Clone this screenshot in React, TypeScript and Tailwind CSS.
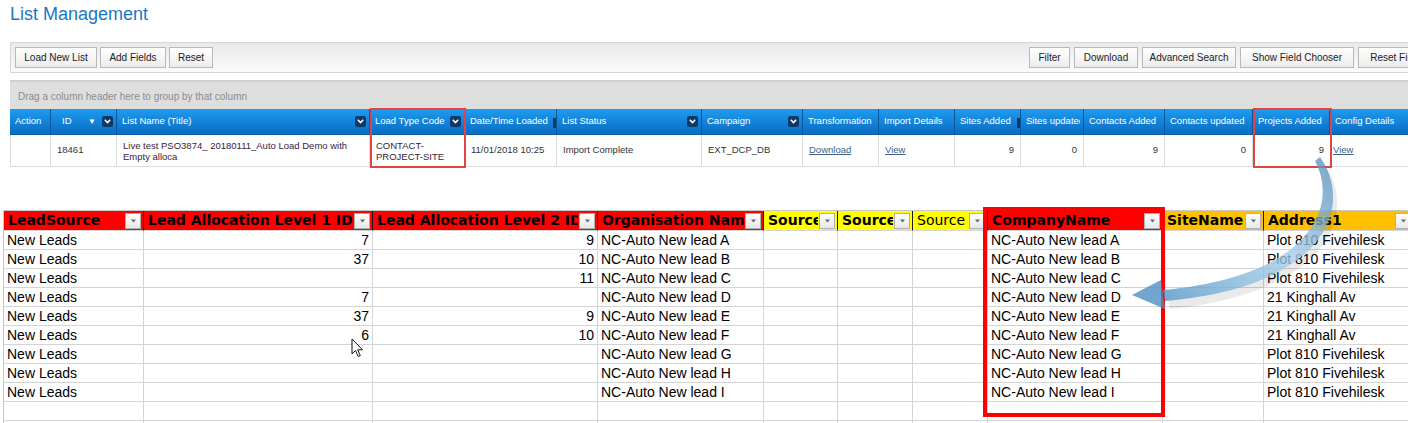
import React from 'react';

type GridCol = {
  label: string;
  w: number;
  menu?: boolean;
  sort?: boolean;
  sliver?: boolean;
};

const gridCols: GridCol[] = [
  { label: 'Action', w: 41 },
  { label: 'ID', w: 66, sort: true, menu: true },
  { label: 'List Name (Title)', w: 253, menu: true },
  { label: 'Load Type Code', w: 95, menu: true },
  { label: 'Date/Time Loaded', w: 92, sliver: true },
  { label: 'List Status', w: 145, menu: true },
  { label: 'Campaign', w: 101, menu: true },
  { label: 'Transformation', w: 76 },
  { label: 'Import Details', w: 76 },
  { label: 'Sites Added', w: 66, sliver: true },
  { label: 'Sites updated', w: 63 },
  { label: 'Contacts Added', w: 81 },
  { label: 'Contacts updated', w: 88 },
  { label: 'Projects Added', w: 77 },
  { label: 'Config Details', w: 90 },
];

type SheetCol = { label: string; w: number; bg: string; bold?: boolean; right?: boolean };

const sheetCols: SheetCol[] = [
  { label: 'LeadSource', w: 140, bg: 'bg-[#ff0000]', bold: true },
  { label: 'Lead Allocation Level 1 ID', w: 229, bg: 'bg-[#ff0000]', bold: true, right: true },
  { label: 'Lead Allocation Level 2 ID', w: 225, bg: 'bg-[#ff0000]', bold: true, right: true },
  { label: 'Organisation Name', w: 166, bg: 'bg-[#ff0000]', bold: true },
  { label: 'Source', w: 74, bg: 'bg-[#ffff00]', bold: true },
  { label: 'Source', w: 75, bg: 'bg-[#ffff00]', bold: true },
  { label: 'Source', w: 75, bg: 'bg-[#ffff00]' },
  { label: 'CompanyName', w: 175, bg: 'bg-[#ff0000]', bold: true },
  { label: 'SiteName', w: 101, bg: 'bg-[#ffc000]', bold: true },
  { label: 'Address1', w: 150, bg: 'bg-[#ffc000]', bold: true },
];

const l1 = ['7', '37', '', '7', '37', '6', '', '', ''];
const l2 = ['9', '10', '11', '', '9', '10', '', '', ''];
const letters = ['A', 'B', 'C', 'D', 'E', 'F', 'G', 'H', 'I'];
const addr = [
  'Plot 810 Fivehilesk',
  'Plot 810 Fivehilesk',
  'Plot 810 Fivehilesk',
  '21 Kinghall Av',
  '21 Kinghall Av',
  '21 Kinghall Av',
  'Plot 810 Fivehilesk',
  'Plot 810 Fivehilesk',
  'Plot 810 Fivehilesk',
];

const sheetRows: string[][] = [
  ...letters.map((l, i) => [
    'New Leads',
    l1[i],
    l2[i],
    `NC-Auto New lead ${l}`,
    '',
    '',
    '',
    `NC-Auto New lead ${l}`,
    '',
    addr[i],
  ]),
  ['', '', '', '', '', '', '', '', '', ''],
  ['', '', '', '', '', '', '', '', '', ''],
];

function ToolButton({ label, w }: { label: string; w: number }) {
  return (
    <button
      className="h-[21px] shrink-0 border border-[#b9b9b9] bg-gradient-to-b from-white to-[#ececec] text-[10px] text-[#222] whitespace-nowrap overflow-hidden"
      style={{ width: w }}
    >
      {label}
    </button>
  );
}

function MenuIcon() {
  return (
    <span className="w-[11px] h-[11px] rounded-[2px] bg-[#0b3a68] flex items-center justify-center shrink-0">
      <svg width="7" height="5" viewBox="0 0 7 5">
        <path d="M0.8 0.8 L3.5 3.6 L6.2 0.8" fill="none" stroke="white" strokeWidth="1.6" />
      </svg>
    </span>
  );
}

function SheetButton() {
  return (
    <span className="absolute right-[2px] top-[2px] w-[16px] h-[16px] border border-[#b0b0b0] bg-gradient-to-b from-white to-[#e8e8e8] flex items-center justify-center">
      <svg width="7" height="4" viewBox="0 0 7 4">
        <path d="M1 0.5 L6 0.5 L3.5 3.5 Z" fill="#666" />
      </svg>
    </span>
  );
}

export default function App() {
  return (
    <div
      className="relative w-[1408px] h-[423px] overflow-hidden bg-white"
      style={{ fontFamily: '"Liberation Sans", Arial, sans-serif' }}
    >
      <h1 className="pl-[10px] pt-[3px] h-[42px] text-[18px] leading-[22px] text-[#1b76c3] font-normal">
        List Management
      </h1>

      {/* toolbar */}
      <div className="ml-[10px] w-[1433px] h-[31px] border border-[#d6d6d6] bg-gradient-to-b from-[#e9e9e9] to-[#fbfbfb] flex items-center px-[4px]">
        <div className="flex gap-[3px]">
          <ToolButton label="Load New List" w={82} />
          <ToolButton label="Add Fields" w={66} />
          <ToolButton label="Reset" w={44} />
        </div>
        <div className="flex-1" />
        <div className="flex gap-[4px]">
          <ToolButton label="Filter" w={41} />
          <ToolButton label="Download" w={64} />
          <ToolButton label="Advanced Search" w={94} />
          <ToolButton label="Show Field Chooser" w={114} />
          <ToolButton label="Reset Fields" w={80} />
        </div>
      </div>

      {/* group panel */}
      <div className="mt-[7px] ml-[10px] w-[1420px] h-[29px] bg-[#dedede] border-t-2 border-[#d0d0d0] flex items-center pl-[8px] pt-[2px] text-[10px] text-[#8c8c8c]">
        Drag a column header here to group by that column
      </div>

      {/* grid header */}
      <div className="ml-[10px] flex h-[26px] bg-gradient-to-b from-[#1e9cf0] to-[#0a6cc2] border-b border-[#0a5ea8]">
        {gridCols.map((c, i) => (
          <div
            key={i}
            className="relative shrink-0 flex items-center gap-[3px] pl-[5px] pr-[3px] border-r border-[#0a5798] text-white text-[9.5px] whitespace-nowrap overflow-hidden"
            style={{ width: c.w }}
          >
            <span className={`${c.label === 'ID' ? 'pl-[6px]' : ''} flex-1 overflow-hidden`}>{c.label}</span>
            {c.sort && <span className="text-[8px] leading-none mr-[3px]">▼</span>}
            {c.menu && <MenuIcon />}
            {c.sliver && <span className="absolute right-0 top-[9px] w-[3px] h-[10px] bg-[#0b3a68]" />}
          </div>
        ))}
      </div>

      {/* grid data row */}
      <div className="ml-[10px] flex h-[32px] border-b border-[#dcdcdc] text-[9.5px] text-[#333]">
        {gridCols.map((c, i) => {
          let content: React.ReactNode = null;
          let cls = 'pl-[6px]';
          if (i === 1) content = '18461';
          if (i === 2)
            content = (
              <span className="leading-[11px] text-[#3a2238]">
                Live test PSO3874_ 20180111_Auto Load Demo with
                <br />
                Empty alloca
              </span>
            );
          if (i === 3)
            content = (
              <span className="leading-[11px] text-[#3a2238]">
                CONTACT-
                <br />
                PROJECT-SITE
              </span>
            );
          if (i === 4) content = '11/01/2018 10:25';
          if (i === 5) content = 'Import Complete';
          if (i === 6) content = 'EXT_DCP_DB';
          if (i === 7) content = <span className="underline text-[#3d5f8c]">Download</span>;
          if (i === 8) content = <span className="underline text-[#3d5f8c]">View</span>;
          if (i >= 9 && i <= 13) {
            content = ['9', '0', '9', '0', '9'][i - 9];
            cls = 'justify-end pr-[6px]';
          }
          if (i === 14) {
            content = <span className="underline text-[#3d5f8c]">View</span>;
            cls = 'pl-[3px]';
          }
          return (
            <div
              key={i}
              className={`shrink-0 flex items-center whitespace-nowrap overflow-hidden ${
                i === 0 ? 'border-l' : ''
              } ${i < 13 ? 'border-r' : ''} border-[#dcdcdc] ${cls}`}
              style={{ width: c.w }}
            >
              {content}
            </div>
          );
        })}
      </div>

      {/* spreadsheet */}
      <div className="mt-[43px] ml-[3px] border-l border-t border-[#c8c8c8]">
        <div className="flex h-[20px]">
          {sheetCols.map((c, i) => (
            <div
              key={i}
              className={`relative shrink-0 h-[20px] border-r border-[#1a1a1a] border-b border-b-[#d4d4d4] ${c.bg}`}
              style={{ width: c.w }}
            >
              <div
                className={`h-full pl-[4px] pr-[19px] flex items-center overflow-hidden whitespace-nowrap text-[14px] text-black ${
                  c.bold ? 'font-bold' : ''
                }`}
                style={{ fontFamily: '"DejaVu Sans", Verdana, sans-serif' }}
              >
                <span className="overflow-hidden">{c.label}</span>
              </div>
              <SheetButton />
            </div>
          ))}
        </div>
        {sheetRows.map((r, ri) => (
          <div key={ri} className="flex h-[19px]">
            {sheetCols.map((c, ci) => (
              <div
                key={ci}
                className={`shrink-0 h-[19px] border-r border-b border-[#d4d4d4] flex items-center overflow-hidden whitespace-nowrap text-[14px] text-black ${
                  c.right ? 'justify-end pr-[3px]' : 'pl-[3px]'
                }`}
                style={{ width: c.w }}
              >
                {r[ci]}
              </div>
            ))}
          </div>
        ))}
      </div>

      {/* annotation boxes */}
      <div className="absolute left-[370px] top-[108px] w-[96px] h-[60px] border-2 border-[#e24444]" />
      <div className="absolute left-[1253px] top-[108px] w-[79px] h-[60px] border-2 border-[#e24444]" />
      <div className="absolute left-[983px] top-[207px] w-[182px] h-[210px] border-4 border-[#ff0000]" />

      {/* mouse cursor */}
      <svg className="absolute left-[351px] top-[338px]" width="13" height="20" viewBox="0 0 13 20">
        <path d="M1 1 L1 16 L4.5 12.5 L7.2 18.5 L9.3 17.6 L6.7 11.8 L11.5 11.8 Z" fill="white" stroke="#111" strokeWidth="1" strokeLinejoin="round" />
      </svg>

      {/* curved arrow */}
      <svg className="absolute inset-0 pointer-events-none" width="1408" height="423" viewBox="0 0 1408 423">
        <defs>
          <linearGradient id="arr" x1="1320" y1="160" x2="1140" y2="300" gradientUnits="userSpaceOnUse">
            <stop offset="0" stopColor="#5e94bd" />
            <stop offset="0.35" stopColor="#a4cce8" />
            <stop offset="0.7" stopColor="#74acd4" />
            <stop offset="1" stopColor="#3f86bf" />
          </linearGradient>
        </defs>
        <g opacity="0.78">
          <path
            d="M1322 160 C1356 208 1330 290 1168 306 L1166 297 C1318 280 1342 206 1316 164 Z"
            fill="#000"
            opacity="0.1"
            transform="translate(2 3)"
          />
          <path
            d="M1320 157 C1354 205 1328 287 1165 301 L1163 290 C1312 276 1339 206 1315 161 Z"
            fill="url(#arr)"
          />
          <path d="M1132 295 L1161 280 L1165 309 Z" fill="#4a8ec4" />
        </g>
      </svg>
    </div>
  );
}
